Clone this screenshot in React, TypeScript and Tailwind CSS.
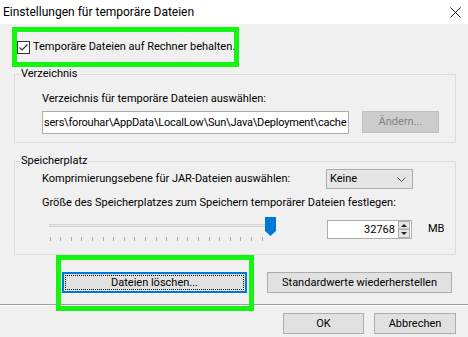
import React from "react";

const pathText = "sers\\forouhar\\AppData\\LocalLow\\Sun\\Java\\Deployment\\cache";

const Checkbox = () => (
  <svg width="13" height="13" viewBox="0 0 13 13" className="shrink-0">
    <rect x="0.5" y="0.5" width="12" height="12" fill="#fff" stroke="#333" />
    <path d="M2.5 6.5 L5 9 L10.5 3.5" fill="none" stroke="#333" strokeWidth="1.2" />
  </svg>
);

const Slider = () => {
  const ticks = Array.from({ length: 21 }, (_, i) => 7.5 + i * 10.6);
  return (
    <svg width="240" height="26" viewBox="0 0 240 26" className="shrink-0">
      <rect x="7.5" y="7.5" width="226" height="2" fill="#e7e7e7" stroke="#d6d6d6" />
      {ticks.map((x, i) => (
        <line key={i} x1={Math.round(x) + 0.5} y1="20" x2={Math.round(x) + 0.5} y2="24" stroke="#a8a8a8" />
      ))}
      <path d="M223 0 H234 V14 L228.5 19 L223 14 Z" fill="#0078d7" />
    </svg>
  );
};

const SpinArrows = () => (
  <svg width="12" height="17" viewBox="0 0 12 17" className="shrink-0">
    <rect x="0.5" y="0.5" width="11" height="7.5" fill="#e5e5e5" stroke="#adadad" />
    <rect x="0.5" y="8.5" width="11" height="8" fill="#e5e5e5" stroke="#adadad" />
    <path d="M3 6 L6 3 L9 6 Z" fill="#222" />
    <path d="M3 11 L6 14 L9 11 Z" fill="#222" />
  </svg>
);

export default function App() {
  return (
    <div className="relative w-[468px] h-[337px] overflow-hidden bg-[#f0f0f0] text-[11px] leading-[16px] text-black font-['Roboto',sans-serif] flex flex-col">
      {/* title bar */}
      <div className="h-[24px] bg-white flex items-center justify-between pl-[3px] pr-[7px] shrink-0">
        <span className="text-[12px]">Einstellungen für temporäre Dateien</span>
        <svg width="11" height="11" viewBox="0 0 11 11">
          <path d="M0.5 0.5 L10.5 10.5 M10.5 0.5 L0.5 10.5" stroke="#111" strokeWidth="1" />
        </svg>
      </div>

      {/* checkbox (highlighted) */}
      <div className="ml-[12px] mt-[3px] w-[227px] h-[40px] border-[5px] border-[#14f514] flex items-center shrink-0">
        <Checkbox />
        <span className="ml-[3px] whitespace-nowrap">Temporäre Dateien auf Rechner behalten.</span>
      </div>

      {/* Verzeichnis */}
      <fieldset className="ml-[14px] w-[442px] border border-[#dcdcdc] pb-[8px] shrink-0">
        <legend className="ml-[5px] px-[1px] leading-[14px]">Verzeichnis</legend>
        <div className="pl-[27px] pt-[10px]">
          <div>Verzeichnis für temporäre Dateien auswählen:</div>
          <div className="mt-[4px] flex items-start gap-[13px]">
            <div className="w-[307px] h-[23px] bg-white border border-[#adadad] flex items-center overflow-hidden pl-[1px] whitespace-nowrap tracking-[-0.2px]">
              {pathText}
            </div>
            <button className="w-[77px] h-[22px] bg-[#cccccc] border border-[#bfbfbf] text-[#838383] flex items-center justify-center">
              Ändern...
            </button>
          </div>
        </div>
      </fieldset>

      {/* Speicherplatz */}
      <fieldset className="ml-[14px] mt-[11px] w-[442px] border border-[#dcdcdc] pb-[11px] shrink-0">
        <legend className="ml-[5px] px-[1px] leading-[14px]">Speicherplatz</legend>
        <div className="pl-[27px] pt-[1px]">
          <div className="flex items-center h-[20px]">
            <span className="w-[284px] whitespace-nowrap">Komprimierungsebene für JAR-Dateien auswählen:</span>
            <div className="w-[87px] h-[20px] bg-[#e5e5e5] border border-[#adadad] flex items-center justify-between pl-[3px] pr-[6px]">
              <span>Keine</span>
              <svg width="9" height="5" viewBox="0 0 9 5">
                <path d="M0.5 0.5 L4.5 4.5 L8.5 0.5" fill="none" stroke="#555" />
              </svg>
            </div>
          </div>
          <div className="mt-[6px] whitespace-nowrap">Größe des Speicherplatzes zum Speichern temporärer Dateien festlegen:</div>
          <div className="mt-[6px] flex items-start">
            <Slider />
            <div className="ml-[45px] mt-[3px] w-[85px] h-[19px] bg-white border border-[#adadad] flex items-center justify-end pr-[1px]">
              <span className="mr-[3px]">32768</span>
              <SpinArrows />
            </div>
            <span className="ml-[16px] mt-[4px]">MB</span>
          </div>
        </div>
      </fieldset>

      {/* action buttons */}
      <div className="mt-[17px] flex gap-[20px] pl-[62px] shrink-0">
        <button className="w-[185px] h-[21px] bg-[#e1e1e1] border-2 border-[#0078d7] p-[1px]">
          <div className="w-full h-full border border-dotted border-black flex items-center justify-center">
            Dateien löschen...
          </div>
        </button>
        <button className="w-[185px] h-[21px] bg-[#e1e1e1] border border-[#adadad] flex items-center justify-center">
          Standardwerte wiederherstellen
        </button>
      </div>

      <div className="mt-[11px] h-px bg-[#a0a0a0] shrink-0" />
      <div className="h-px bg-white shrink-0" />

      <div className="mt-[7px] flex justify-end gap-[10px] pr-[12px] shrink-0">
        <button className="w-[81px] h-[21px] bg-[#e1e1e1] border border-[#adadad] flex items-center justify-center">OK</button>
        <button className="w-[82px] h-[21px] bg-[#e1e1e1] border border-[#adadad] flex items-center justify-center">Abbrechen</button>
      </div>

      {/* highlight around the delete button */}
      <div className="absolute left-[56px] top-[255px] w-[198px] h-[56px] border-[5px] border-[#14f514] pointer-events-none" />
    </div>
  );
}
